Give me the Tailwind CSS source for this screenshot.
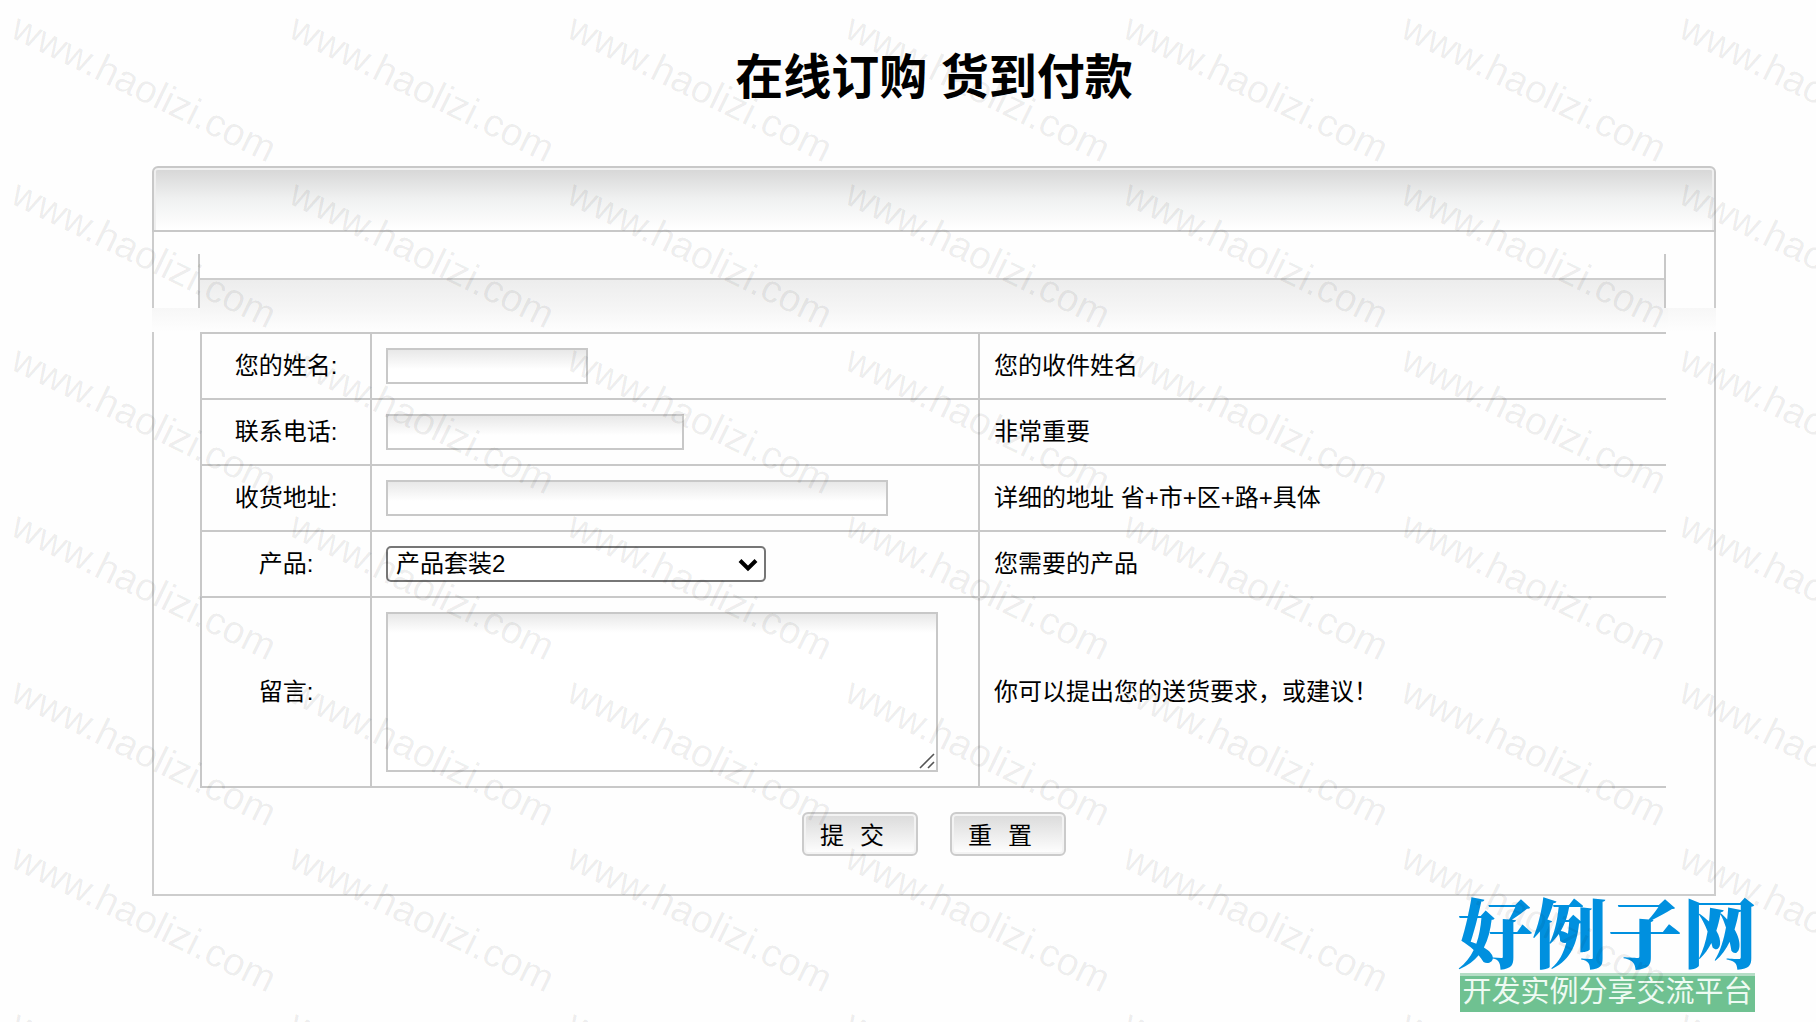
<!DOCTYPE html>
<html lang="zh-CN">
<head>
<meta charset="utf-8">
<meta name="viewport" content="width=device-width, initial-scale=1">
<title>在线订购 货到付款</title>
<script src="https://cdn.jsdelivr.net/npm/@tailwindcss/browser@4"></script>
</head>
<body class="relative min-h-screen overflow-x-hidden bg-[#fefefe] pl-[152px] pr-[100px] font-['Liberation_Sans','Noto_Sans_CJK_SC',sans-serif] text-2xl text-black">

<main>
  <h1 class="pt-[42px] pb-[52px] text-center text-5xl leading-[72px] font-bold">在线订购 货到付款</h1>

  <form onsubmit="return false">
    <div class="h-[66px] rounded-t-[6px] border-2 border-[#c8c8c8] bg-linear-to-b from-[#d6d6d6] via-[#f0f1f1] to-white shadow-[inset_0_2px_0_#f2f2f2,inset_2px_0_0_#efefef,inset_-2px_0_0_#efefef]"></div>
    <div class="border-x-2 border-[#cdcdcd] pt-[22px] pr-12 pl-[44px]">
      <div class="border-x-2 border-[#c8c8c8] pt-6">
        <div class="h-[30px] border-t-2 border-[#cdcdcd] bg-linear-to-b from-[#ededed] to-[#f5f5f5]"></div>
      </div>
    </div>
    <div class="h-6 bg-linear-to-b from-[#f7f7f7] to-[#fefefe] px-12">
      <div class="h-6 bg-linear-to-b from-[#f5f5f5] to-[#fefefe]"></div>
    </div>

    <div class="border-x-2 border-b-2 border-[#cdcdcd] pr-12 pb-[38px] pl-[46px]">
      <table class="w-full table-fixed border-separate border-spacing-0 border-t-2 border-[#c8c8c8] leading-9">
        <colgroup><col class="w-[170px]"><col class="w-[608px]"><col></colgroup>
        <tbody>
          <tr>
            <th class="border-b-2 border-l-2 border-[#c8c8c8] p-[14px] text-center font-normal"><label for="name">您的姓名:</label></th>
            <td class="border-b-2 border-l-2 border-[#c8c8c8] p-[14px]"><input id="name" type="text" class="block h-9 w-[202px] border-2 border-[#c8c8c8] bg-linear-to-b from-[#e8e8e8] to-white to-60% px-2"></td>
            <td class="border-b-2 border-l-2 border-[#c8c8c8] p-[14px]">您的收件姓名</td>
          </tr>
          <tr>
            <th class="border-b-2 border-l-2 border-[#c8c8c8] p-[14px] text-center font-normal"><label for="phone">联系电话:</label></th>
            <td class="border-b-2 border-l-2 border-[#c8c8c8] p-[14px]"><input id="phone" type="tel" class="block h-9 w-[298px] border-2 border-[#c8c8c8] bg-linear-to-b from-[#e8e8e8] to-white to-60% px-2"></td>
            <td class="border-b-2 border-l-2 border-[#c8c8c8] p-[14px]">非常重要</td>
          </tr>
          <tr>
            <th class="border-b-2 border-l-2 border-[#c8c8c8] p-[14px] text-center font-normal"><label for="address">收货地址:</label></th>
            <td class="border-b-2 border-l-2 border-[#c8c8c8] p-[14px]"><input id="address" type="text" class="block h-9 w-[502px] border-2 border-[#c8c8c8] bg-linear-to-b from-[#e8e8e8] to-white to-60% px-2"></td>
            <td class="border-b-2 border-l-2 border-[#c8c8c8] p-[14px]">详细的地址 省+市+区+路+具体</td>
          </tr>
          <tr>
            <th class="border-b-2 border-l-2 border-[#c8c8c8] p-[14px] text-center font-normal"><label for="product">产品:</label></th>
            <td class="border-b-2 border-l-2 border-[#c8c8c8] p-[14px]">
              <div class="relative w-[380px]">
                <select id="product" class="block h-9 w-full appearance-none rounded-[5px] border-2 border-[#767676] bg-white px-2 leading-8">
                  <option>产品套装1</option>
                  <option selected>产品套装2</option>
                  <option>产品套装3</option>
                </select>
                <svg class="pointer-events-none absolute top-3 right-2 h-[14px] w-5" viewBox="0 0 20 14" fill="none" stroke="#000" stroke-width="4"><path d="M2 2.5 10 10.500 18 2.500"/></svg>
              </div>
            </td>
            <td class="border-b-2 border-l-2 border-[#c8c8c8] p-[14px]">您需要的产品</td>
          </tr>
          <tr>
            <th class="border-b-2 border-l-2 border-[#c8c8c8] p-[14px] text-center font-normal"><label for="message">留言:</label></th>
            <td class="border-b-2 border-l-2 border-[#c8c8c8] p-[14px]">
              <div class="relative w-[552px]">
                <textarea id="message" class="block h-40 w-full resize-none border-2 border-[#c8c8c8] bg-linear-to-b from-[#e8e8e8] to-white to-12% px-2"></textarea>
                <svg class="pointer-events-none absolute right-[3px] bottom-[3px] size-4" viewBox="0 0 16 16" fill="none" stroke="#555" stroke-width="1.600"><path d="M1 15 15 1M9 15l6-6"/></svg>
              </div>
            </td>
            <td class="border-b-2 border-l-2 border-[#c8c8c8] p-[14px]">你可以提出您的送货要求，或建议！</td>
          </tr>
        </tbody>
      </table>

      <div class="flex justify-center gap-8 pt-6 pl-0.5">
        <button type="submit" class="flex h-11 w-[116px] items-center gap-4 rounded-md border-2 border-[#cbcbcb] bg-linear-to-b from-[#dadada] to-white px-4 pt-1 shadow-[inset_0_0_0_2px_#f3f3f3]"><span>提</span> <span>交</span></button>
        <button type="reset" class="flex h-11 w-[116px] items-center gap-4 rounded-md border-2 border-[#cbcbcb] bg-linear-to-b from-[#dadada] to-white px-4 pt-1 shadow-[inset_0_0_0_2px_#f3f3f3]"><span>重</span> <span>置</span></button>
      </div>
    </div>
  </form>
</main>

<a href="#" class="absolute right-[61px] bottom-[10px] block w-[295px] whitespace-nowrap">
  <span class="flex justify-center pb-1 text-[75px] leading-[78px] font-black text-[#0090df] font-['Noto_Serif_CJK_SC','Noto_Sans_CJK_SC',serif]">好例子网</span>
  <span class="block h-[39px] border-t-3 border-[#b5dec6] bg-[#6fc191] text-center text-[29px] leading-8 text-[#eefaf2]">开发实例分享交流平台</span>
</a>

<div id="watermark" aria-hidden="true" class="pointer-events-none absolute inset-0 grid auto-rows-[166px] grid-cols-[repeat(7,278px)] overflow-hidden"></div>
<script>
  const layer = document.getElementById('watermark');
  for (let i = 0; i < 49; i++) {
    const mark = document.createElement('span');
    mark.className = 'origin-top-left rotate-26 pl-6 text-[39px] leading-8 whitespace-nowrap text-black/7';
    mark.textContent = 'www.haolizi.com';
    layer.append(mark);
  }
</script>
</body>
</html>
